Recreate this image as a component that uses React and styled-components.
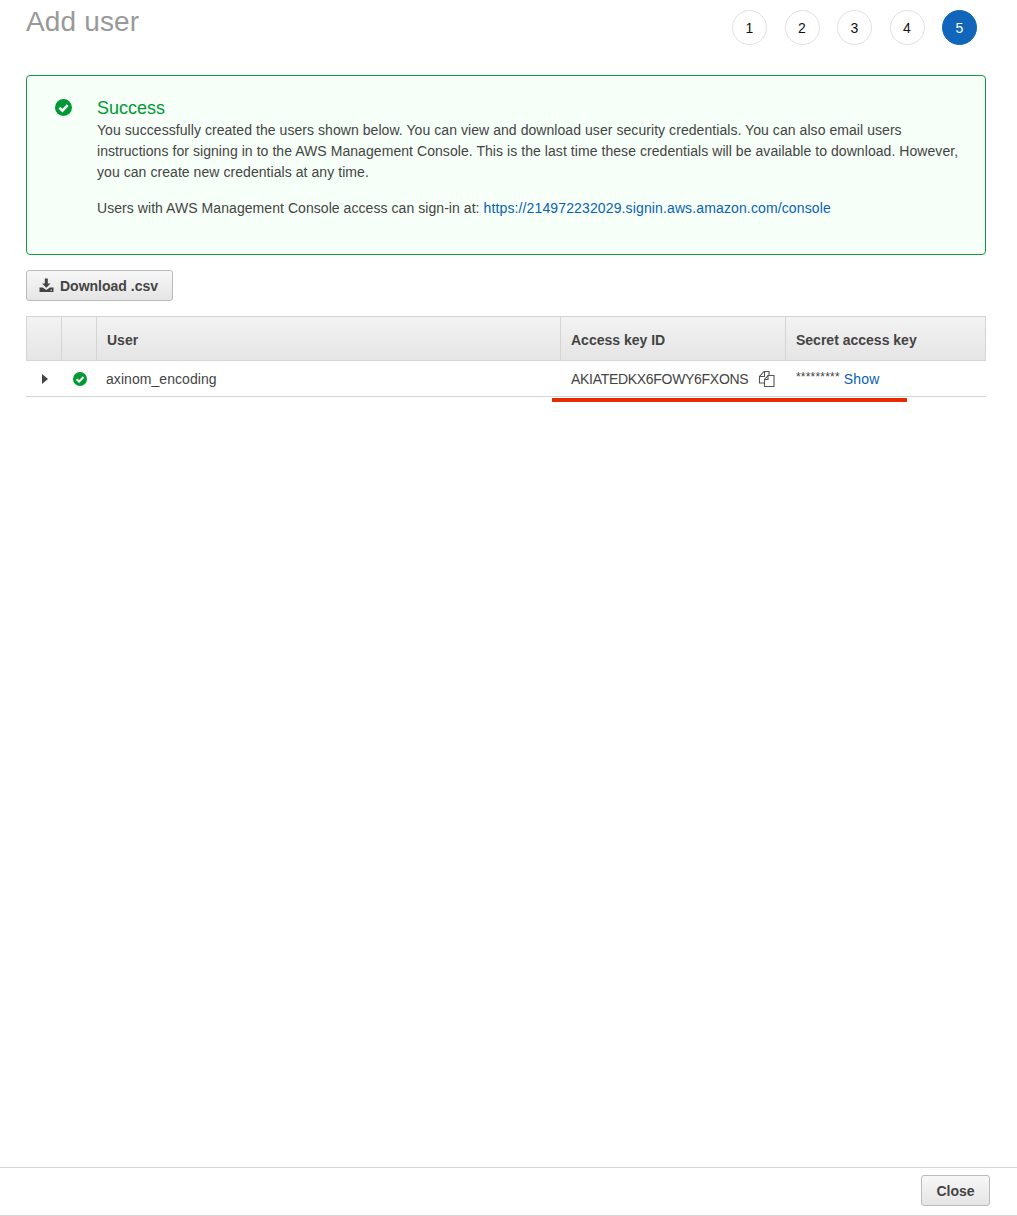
import React from "react";
import styled, { createGlobalStyle } from "styled-components";

const Global = createGlobalStyle`
  html, body { margin: 0; padding: 0; background: #fff; }
  body { font-family: "Liberation Sans", Arial, sans-serif; color: #444; }
`;

const Page = styled.div`
  width: 1017px;
  height: 1216px;
  display: flex;
  flex-direction: column;
  overflow: hidden;
`;
const Main = styled.main`
  flex: 1;
  padding: 0 31px 0 26px;
`;
const Header = styled.header`
  height: 75px;
  display: flex;
  justify-content: space-between;
  align-items: flex-start;
`;
const Title = styled.h1`
  margin: 4px 0 0;
  font-size: 28px;
  line-height: 36px;
  font-weight: 400;
  letter-spacing: 0.15px;
  color: #999;
`;
const Steps = styled.ol`
  list-style: none;
  margin: 10px 9px 0 0;
  padding: 0;
  display: flex;
  gap: 17.5px;
`;
const Step = styled.li`
  width: 35px;
  height: 35px;
  box-sizing: border-box;
  border-radius: 50%;
  border: 1px solid ${p => (p.$active ? "#1166bb" : "#e1e1e1")};
  background: ${p => (p.$active ? "#1166bb" : "#fff")};
  color: ${p => (p.$active ? "#fff" : "#111")};
  font-size: 14px;
  display: flex;
  align-items: center;
  justify-content: center;
`;
const Alert = styled.section`
  box-sizing: border-box;
  height: 180px;
  border: 1px solid #0f9d3f;
  border-radius: 4px;
  background: #f6fff8;
  padding: 21px 20px 0 28px;
  display: flex;
  gap: 25px;
`;
const AlertIcon = styled.div`
  width: 17px;
  height: 17px;
  margin-top: 2px;
  flex: none;
`;
const AlertBody = styled.div`
  font-size: 14px;
  line-height: 21px;
  letter-spacing: 0.06px;
  color: #444;
`;
const AlertTitle = styled.div`
  font-size: 18px;
  line-height: 23px;
  letter-spacing: 0;
  color: #009933;
`;
const Paragraph = styled.p`
  margin: 0 0 15px;
`;
const Link = styled.a`
  color: #0a5fb4;
  text-decoration: none;
  letter-spacing: 0.13px;
`;
const Button = styled.button`
  box-sizing: border-box;
  height: 31px;
  padding: 0 14px 0 12px;
  display: inline-flex;
  align-items: center;
  gap: 6px;
  border: 1px solid #bbb;
  border-radius: 3px;
  background: linear-gradient(#f7f7f7, #e5e5e5);
  font-family: inherit;
  font-size: 14px;
  font-weight: 700;
  color: #444;
`;
const Toolbar = styled.div`
  margin-top: 15px;
  height: 31px;
  display: flex;
`;
const TableWrap = styled.div`
  position: relative;
  margin-top: 15px;
  width: 960px;
`;
const Table = styled.div`
  display: grid;
  grid-template-columns: 36px 35px 464px 225px 200px;
`;
const HeadCell = styled.div`
  box-sizing: border-box;
  height: 45px;
  padding: 3px 10px 0;
  display: flex;
  align-items: center;
  background: linear-gradient(#f3f3f3, #e5e5e5);
  border-top: 1px solid #d5d5d5;
  border-bottom: 1px solid #d5d5d5;
  border-right: 1px solid #d5d5d5;
  ${p => p.$first && "border-left: 1px solid #d5d5d5;"}
  font-size: 14px;
  font-weight: 700;
  color: #444;
`;
const Cell = styled.div`
  box-sizing: border-box;
  height: 36px;
  padding: 0 ${p => p.$right ?? 10}px 0 ${p => p.$left ?? 10}px;
  display: flex;
  align-items: center;
  justify-content: ${p => (p.$center ? "center" : "flex-start")};
  gap: ${p => p.$gap || 0}px;
  border-bottom: 1px solid #d5d5d5;
  font-size: 14px;
  letter-spacing: ${p => p.$spacing || 0}px;
  color: #444;
  white-space: nowrap;
`;
const Stars = styled.span`
  font-size: 12px;
  letter-spacing: 0.2px;
  margin-right: 4px;
  position: relative;
  top: -2px;
`;
const Highlight = styled.div`
  position: absolute;
  left: 526px;
  top: 82px;
  width: 355px;
  height: 4px;
  background: #e82a00;
`;
const Footer = styled.footer`
  box-sizing: border-box;
  height: 49px;
  padding: 0 27px 2px 0;
  border-top: 1px solid #d5d5d5;
  border-bottom: 1px solid #d5d5d5;
  display: flex;
  align-items: center;
  justify-content: flex-end;
`;
const CloseButton = styled(Button)`
  width: 69px;
  padding: 0;
  justify-content: center;
`;
const IconBox = styled.span`
  flex: none;
  display: block;
  width: 17px;
  height: 17px;
`;

const Check = ({ size }) => (
  <svg width={size} height={size} viewBox="0 0 16 16" aria-hidden="true" style={{ display: "block" }}>
    <circle cx="8" cy="8" r="8" fill="#009933" />
    <path d="M4.1 8.2 7 11l5-5.2" fill="none" stroke="#fff" strokeWidth="2.4" />
  </svg>
);

const DownloadIcon = () => (
  <svg width="15" height="15" viewBox="0 0 15 15" aria-hidden="true">
    <path d="M5.8 0.5h3v5h2.7L7.3 9.8 3.1 5.5h2.7z" fill="#444" />
    <path d="M0.5 9.5h3.2l3.6 2.4 3.6-2.4h3.6v4.5H.5z" fill="#444" />
    <circle cx="12.2" cy="12.2" r=".7" fill="#eee" />
  </svg>
);

const CopyIcon = () => (
  <IconBox>
    <svg width="17" height="17" viewBox="0 0 17 17" aria-hidden="true" fill="none" stroke="#555" strokeWidth="1.1">
      <path d="M6.5 13H1.5V6.5L6 1.5H11V5" />
      <path d="M6.5 1.5V6.5H1.5" />
      <path d="M6.5 9.5 10 5.5H16V16.5H6.5Z" fill="#fff" />
      <path d="M10 5.5V9.5H6.5" />
    </svg>
  </IconBox>
);

const Caret = () => (
  <svg width="6" height="10" viewBox="0 0 6 10" aria-hidden="true" style={{ display: "block" }}>
    <path d="M0 0l6 5-6 5z" fill="#444" />
  </svg>
);

export default function App() {
  return (
    <Page>
      <Global />
      <Main>
        <Header>
          <Title>Add user</Title>
          <Steps>
            {[1, 2, 3, 4, 5].map(n => (
              <Step key={n} $active={n === 5}>{n}</Step>
            ))}
          </Steps>
        </Header>
        <Alert>
          <AlertIcon><Check size={17} /></AlertIcon>
          <AlertBody>
            <AlertTitle>Success</AlertTitle>
            <Paragraph>
              You successfully created the users shown below. You can view and download user security credentials. You can also email users instructions for signing in to the AWS Management Console. This is the last time these credentials will be available to download. However, you can create new credentials at any time.
            </Paragraph>
            <Paragraph>
              Users with AWS Management Console access can sign-in at: <Link href="#">https://214972232029.signin.aws.amazon.com/console</Link>
            </Paragraph>
          </AlertBody>
        </Alert>
        <Toolbar>
          <Button><DownloadIcon />Download .csv</Button>
        </Toolbar>
        <TableWrap>
          <Table>
            <HeadCell $first />
            <HeadCell />
            <HeadCell>User</HeadCell>
            <HeadCell>Access key ID</HeadCell>
            <HeadCell>Secret access key</HeadCell>
            <Cell $center $left={2} $right={0}><Caret /></Cell>
            <Cell $center $left={1} $right={0}><Check size={14} /></Cell>
            <Cell $left={9} $spacing={0.06}>axinom_encoding</Cell>
            <Cell $gap={10} $spacing={-0.3} $right={0}>AKIATEDKX6FOWY6FXONS<CopyIcon /></Cell>
            <Cell><Stars>*********</Stars><Link href="#">Show</Link></Cell>
          </Table>
          <Highlight />
        </TableWrap>
      </Main>
      <Footer>
        <CloseButton>Close</CloseButton>
      </Footer>
    </Page>
  );
}
